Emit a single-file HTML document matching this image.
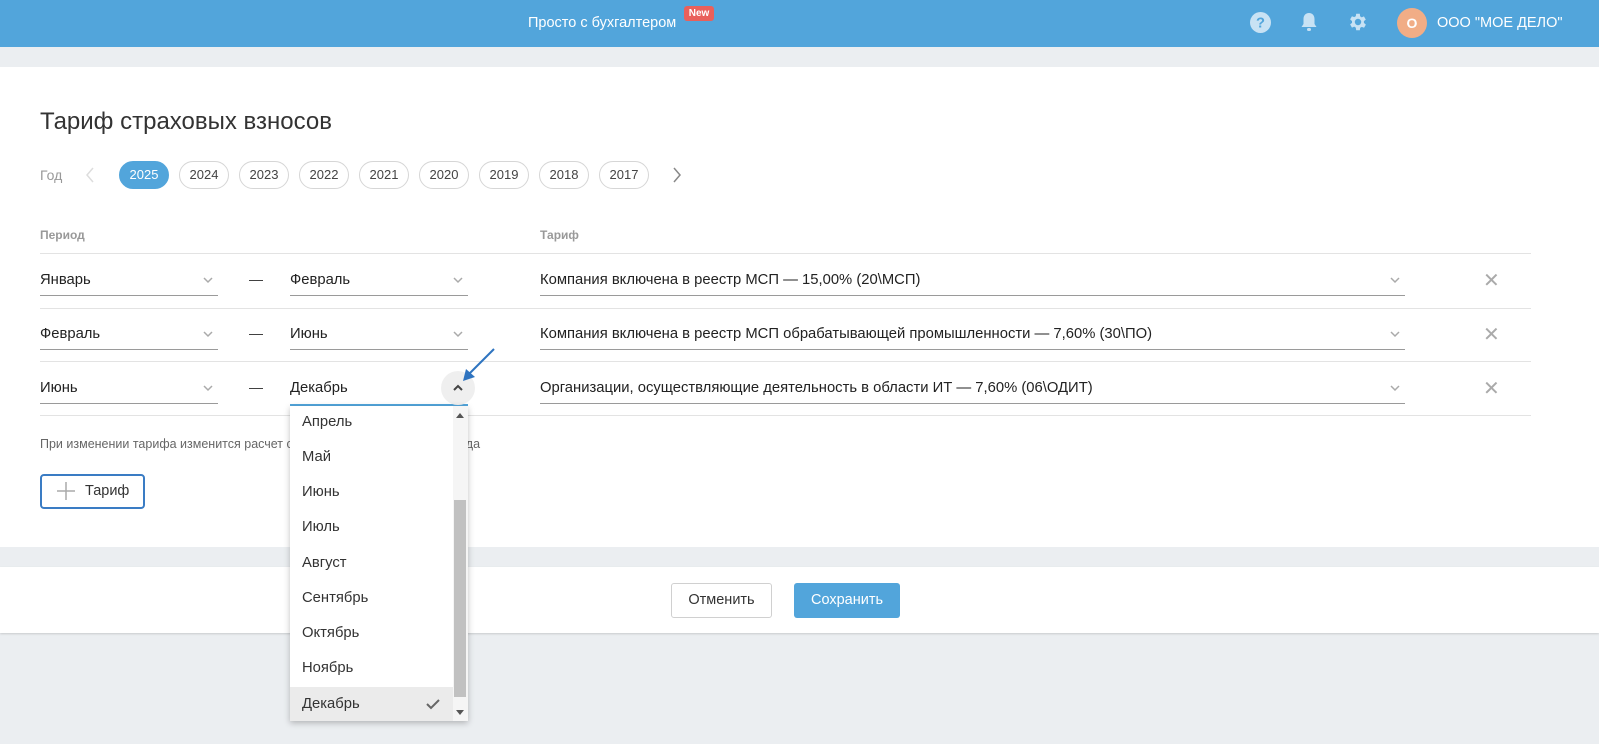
<!DOCTYPE html>
<html><head><meta charset="utf-8">
<style>
*{box-sizing:border-box;margin:0;padding:0}
body{width:1599px;height:744px;background:#ebeef1;font-family:"Liberation Sans",Arial,sans-serif;position:relative;overflow:hidden;color:#222}
.abs{position:absolute}
.hdr{left:0;top:0;width:1599px;height:47px;background:#52a5db}
.card{left:0;width:1599px;background:#fff}
.yr{position:absolute;top:161px;height:28px;width:50px;border:1px solid #d6d6d6;border-radius:14px;font-size:13px;color:#444;text-align:center;line-height:26px}
.sel{position:absolute;font-size:14.8px;color:#222;height:24px;border-bottom:1px solid #9a9a9a}
.chev{position:absolute;right:4px;top:2px;width:12px;height:12px}
.dash{position:absolute;font-size:14px;color:#333}
.line{position:absolute;left:40px;width:1491px;height:1px;background:#e3e3e3}
.x{position:absolute;left:1483px;font-size:20px;color:#aaa}
.it{position:absolute;left:12px;font-size:14.8px;color:#333}
</style></head><body>
<div class="abs hdr"></div>
<div class="abs" style="left:528px;top:15px;color:#fff;font-size:14.5px">Просто с бухгалтером</div>
<div class="abs" style="left:684px;top:6px;width:30px;height:15px;background:#e9605b;border-radius:3px;color:#fff;font-size:10px;font-weight:bold;text-align:center;line-height:15px">New</div>
<svg class="abs" style="left:1250px;top:12px" width="21" height="21" viewBox="0 0 20 20"><circle cx="10" cy="10" r="10" fill="#c8e2f4"/><text x="10" y="15" text-anchor="middle" font-family="Liberation Sans" font-weight="bold" font-size="14" fill="#52a5db">?</text></svg>
<svg class="abs" style="left:1299px;top:11px" width="20" height="22" viewBox="0 0 20 22"><path d="M10 2c-3.5 0-5.5 2.6-5.5 6v5L2.5 16h15l-2-3V8c0-3.4-2-6-5.5-6z" fill="#c8e2f4"/><rect x="8" y="17" width="4" height="3" rx="1.5" fill="#c8e2f4"/></svg>
<svg class="abs" style="left:1347px;top:11px" width="22" height="22" viewBox="0 0 24 24"><path fill="#c8e2f4" d="M19.4 13a7.5 7.5 0 0 0 0-2l2.1-1.6-2-3.5-2.5 1a7.6 7.6 0 0 0-1.7-1L15 3h-4l-.4 2.7a7.6 7.6 0 0 0-1.7 1l-2.5-1-2 3.5L6.5 11a7.5 7.5 0 0 0 0 2l-2.1 1.6 2 3.5 2.5-1a7.6 7.6 0 0 0 1.7 1L11 21h4l.4-2.7a7.6 7.6 0 0 0 1.7-1l2.5 1 2-3.5zM13 15.5a3.5 3.5 0 1 1 0-7 3.5 3.5 0 0 1 0 7z" transform="translate(-1 0)"/></svg>
<div class="abs" style="left:1397px;top:8px;width:30px;height:30px;border-radius:50%;background:#f1ad86;color:#fff;font-weight:bold;font-size:14px;text-align:center;line-height:30px">О</div>
<div class="abs" style="left:1437px;top:15px;color:#fff;font-size:14.5px">ООО "МОЕ ДЕЛО"</div>

<div class="abs card" style="top:67px;height:480px"></div>
<div class="abs card" style="top:567px;height:66px;box-shadow:0 1px 2px rgba(0,0,0,.15)"></div>

<div class="abs" style="left:40px;top:108px;font-size:24px;color:#333">Тариф страховых взносов</div>
<div class="abs" style="left:40px;top:167px;font-size:14px;color:#999">Год</div>
<svg class="abs" style="left:85px;top:167px" width="10" height="16"><path d="M8 1L2 8l6 7" stroke="#ddd" stroke-width="1.5" fill="none"/></svg>
<div class="yr" style="left:119px;background:#52a5db;border-color:#52a5db;color:#fff">2025</div>
<div class="yr" style="left:179px">2024</div>
<div class="yr" style="left:239px">2023</div>
<div class="yr" style="left:299px">2022</div>
<div class="yr" style="left:359px">2021</div>
<div class="yr" style="left:419px">2020</div>
<div class="yr" style="left:479px">2019</div>
<div class="yr" style="left:539px">2018</div>
<div class="yr" style="left:599px">2017</div>
<svg class="abs" style="left:672px;top:167px" width="10" height="16"><path d="M2 1l6 7-6 7" stroke="#888" stroke-width="1.5" fill="none"/></svg>

<div class="abs" style="left:40px;top:228px;font-size:12px;color:#999;font-weight:bold">Период</div>
<div class="abs" style="left:540px;top:228px;font-size:12px;color:#999;font-weight:bold">Тариф</div>
<div class="line" style="top:253px"></div>
<div class="line" style="top:308px"></div>
<div class="line" style="top:361px"></div>
<div class="line" style="top:415px"></div>

<div class="sel" style="left:40px;top:272px;width:178px">Январь<svg class="chev" viewBox="0 0 12 12"><path d="M2 4l4 4 4-4" stroke="#aaa" stroke-width="1.5" fill="none"/></svg></div>
<div class="dash" style="left:249px;top:271px">—</div>
<div class="sel" style="left:290px;top:272px;width:178px">Февраль<svg class="chev" viewBox="0 0 12 12"><path d="M2 4l4 4 4-4" stroke="#aaa" stroke-width="1.5" fill="none"/></svg></div>
<div class="sel" style="left:540px;top:272px;width:865px">Компания включена в реестр МСП — 15,00% (20\МСП)<svg class="chev" viewBox="0 0 12 12"><path d="M2 4l4 4 4-4" stroke="#aaa" stroke-width="1.5" fill="none"/></svg></div>
<div class="x" style="top:268px">✕</div>

<div class="sel" style="left:40px;top:326px;width:178px">Февраль<svg class="chev" viewBox="0 0 12 12"><path d="M2 4l4 4 4-4" stroke="#aaa" stroke-width="1.5" fill="none"/></svg></div>
<div class="dash" style="left:249px;top:325px">—</div>
<div class="sel" style="left:290px;top:326px;width:178px">Июнь<svg class="chev" viewBox="0 0 12 12"><path d="M2 4l4 4 4-4" stroke="#aaa" stroke-width="1.5" fill="none"/></svg></div>
<div class="sel" style="left:540px;top:326px;width:865px">Компания включена в реестр МСП обрабатывающей промышленности — 7,60% (30\ПО)<svg class="chev" viewBox="0 0 12 12"><path d="M2 4l4 4 4-4" stroke="#aaa" stroke-width="1.5" fill="none"/></svg></div>
<div class="x" style="top:322px">✕</div>

<div class="sel" style="left:40px;top:380px;width:178px">Июнь<svg class="chev" viewBox="0 0 12 12"><path d="M2 4l4 4 4-4" stroke="#aaa" stroke-width="1.5" fill="none"/></svg></div>
<div class="dash" style="left:249px;top:379px">—</div>
<div class="sel" style="left:290px;top:380px;width:178px;border-bottom:2px solid #52a5db;height:26px">Декабрь</div>
<div class="abs" style="left:441px;top:371px;width:34px;height:34px;border-radius:50%;background:#efefef"></div>
<svg class="abs" style="left:452px;top:382px" width="12" height="12"><path d="M2 8l4-4 4 4" stroke="#444" stroke-width="2" fill="none"/></svg>
<svg class="abs" style="left:460px;top:345px" width="40" height="40"><path d="M34 4L7 31" stroke="#2f74c0" stroke-width="2"/><path d="M3 36l3-12 9 8z" fill="#2f74c0"/></svg>
<div class="sel" style="left:540px;top:380px;width:865px">Организации, осуществляющие деятельность в области ИТ — 7,60% (06\ОДИТ)<svg class="chev" viewBox="0 0 12 12"><path d="M2 4l4 4 4-4" stroke="#aaa" stroke-width="1.5" fill="none"/></svg></div>
<div class="x" style="top:376px">✕</div>

<div class="abs" style="left:40px;top:437px;font-size:12.5px;color:#666">При изменении тарифа изменится расчет страховых взносов с начала года</div>
<div class="abs" style="left:40px;top:474px;width:105px;height:35px;border:2px solid #3a7cc4;border-radius:4px"></div>
<svg class="abs" style="left:57px;top:482px" width="18" height="18"><path d="M9 0v18M0 9h18" stroke="#aaa" stroke-width="1.5"/></svg>
<div class="abs" style="left:85px;top:483px;font-size:14.5px;color:#333">Тариф</div>

<div class="abs" style="left:671px;top:583px;width:101px;height:35px;border:1px solid #d0d0d0;border-radius:3px;font-size:14.5px;color:#333;text-align:center;line-height:33px">Отменить</div>
<div class="abs" style="left:794px;top:583px;width:106px;height:35px;background:#52a5db;border-radius:3px;font-size:14.5px;color:#fff;text-align:center;line-height:35px">Сохранить</div>

<div class="abs" style="left:290px;top:406px;width:178px;height:315px;background:#fff;box-shadow:0 2px 6px rgba(0,0,0,.25);overflow:hidden">
<div class="it" style="top:8px">Апрель</div>
<div class="it" style="top:43px">Май</div>
<div class="it" style="top:78px">Июнь</div>
<div class="it" style="top:113px">Июль</div>
<div class="it" style="top:149px">Август</div>
<div class="it" style="top:184px">Сентябрь</div>
<div class="it" style="top:219px">Октябрь</div>
<div class="it" style="top:254px">Ноябрь</div>
<div class="abs" style="left:0;top:281px;width:163px;height:34px;background:#ebebeb"></div>
<div class="it" style="top:290px">Декабрь</div>
<svg class="abs" style="left:136px;top:292px" width="14" height="12"><path d="M1 6l4 4 8-8" stroke="#666" stroke-width="2" fill="none"/></svg>
<div class="abs" style="left:163px;top:0;width:15px;height:315px;background:#f5f5f5"></div>
<div class="abs" style="left:164px;top:94px;width:12px;height:197px;background:#c1c1c1"></div>
<svg class="abs" style="left:166px;top:7px" width="8" height="5"><path d="M0 5L4 0 8 5z" fill="#555"/></svg>
<svg class="abs" style="left:166px;top:304px" width="8" height="5"><path d="M0 0L4 5 8 0z" fill="#555"/></svg>
</div>
</body></html>
